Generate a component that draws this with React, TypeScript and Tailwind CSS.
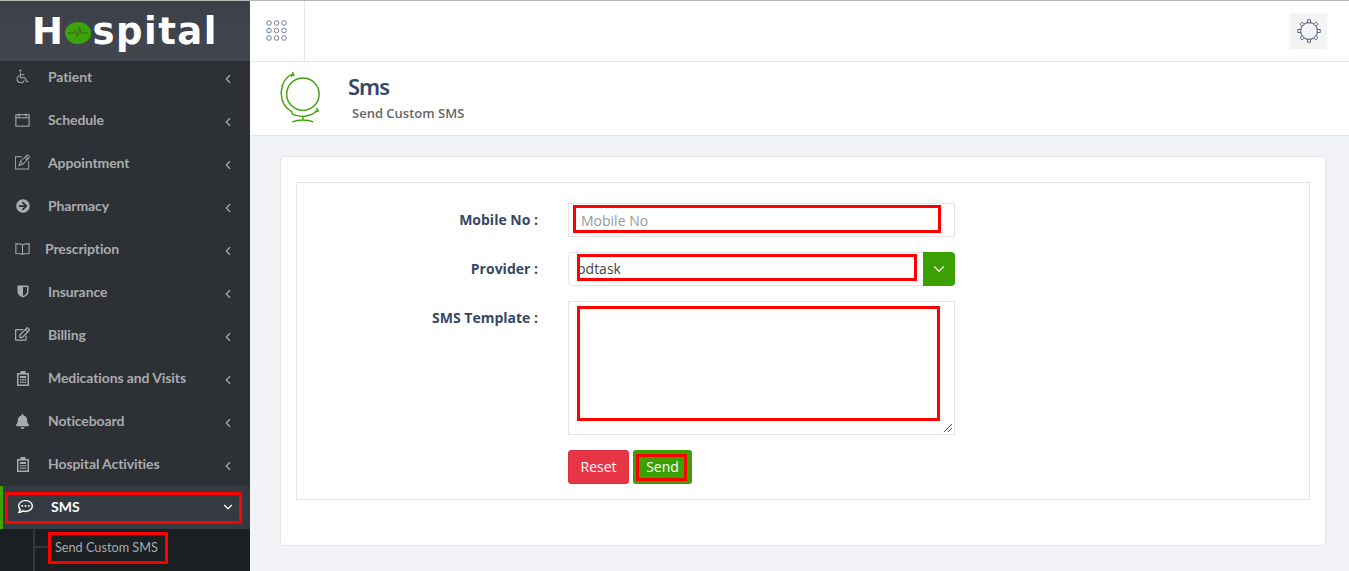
import { ChevronDown, ChevronLeft } from 'lucide-react';
import { FaArrowCircleRight, FaBell, FaRegCommentDots, FaRegEdit } from 'react-icons/fa';
import { TfiPencilAlt } from 'react-icons/tfi';

function WheelchairIcon() {
  return (
    <svg width="17" height="17" viewBox="0 0 17 17" fill="none" stroke="currentColor" strokeWidth="1.200" className="-mt-[2px]">
      <circle cx="6" cy="1.800" r="1.300" fill="currentColor" stroke="none" />
      <path d="M6 4v6h5l2.500 4.500 1.500-.5" />
      <path d="M6 6.500h4.500" />
      <path d="M4.500 7.500a4.300 4.300 0 1 0 6 5.500" />
    </svg>
  );
}

function CalendarIcon() {
  return (
    <svg width="17" height="16" viewBox="0 0 17 16" fill="none" stroke="currentColor" strokeWidth="1.200" className="-mt-[2px]">
      <rect x="1" y="2" width="15" height="13" />
      <path d="M1 5.500h15" />
      <path d="M4.500 1v3M12.500 1v3" strokeWidth="1.600" />
    </svg>
  );
}

function BookIcon() {
  return (
    <svg width="17" height="14" viewBox="0 0 17 14" fill="none" stroke="currentColor" strokeWidth="1.200" className="-mt-[2px]">
      <path d="M8.500 2.500C7 1 3.500 1 1 1v11c2.500 0 6 0 7.500 1 1.500-1 5-1 7.500-1V1c-2.500 0-6 0-7.500 1.500zM8.500 2.500V13" />
    </svg>
  );
}

function ShieldIcon() {
  return (
    <svg width="12" height="13" viewBox="0 0 12 13" fill="currentColor" className="-mt-[2px]">
      <path d="M0.500 0.500h11v6c0 3-2.500 5-5.500 6-3-1-5.500-3-5.500-6z" />
      <path d="M6 2h4v4.500c0 2-1.800 3.500-4 4.500z" fill="#2d3035" />
    </svg>
  );
}

function ClipboardHospitalIcon() {
  return (
    <svg width="12" height="15" viewBox="0 0 12 15" fill="currentColor">
      <path d="M0 2h3.500V0h5v2H12v13H0zM1.500 3.500V13.500h9V3.500z" fillRule="evenodd" />
      <path d="M3 5h6v2H3zM3 8h1.500v1.500H3zM5.250 8h1.500v1.500h-1.500zM7.500 8H9v1.500H7.500zM3 10.500h1.500V12H3zM5.250 10.500h1.500V12h-1.500zM7.500 10.500H9V12H7.500z" />
    </svg>
  );
}

const navItems = [
  { label: 'Patient', icon: <WheelchairIcon />, textClass: 'ml-[18px]' },
  { label: 'Schedule', icon: <CalendarIcon />, textClass: 'ml-[18px]' },
  { label: 'Appointment', icon: <TfiPencilAlt size={16} className="-mt-[3px]" />, textClass: 'ml-[18px]' },
  { label: 'Pharmacy', icon: <FaArrowCircleRight size={14} className="-mt-[2px]" />, textClass: 'ml-[18px]' },
  { label: 'Prescription', icon: <BookIcon />, textClass: 'ml-[15px]' },
  { label: 'Insurance', icon: <ShieldIcon />, textClass: 'ml-[18px]' },
  { label: 'Billing', icon: <FaRegEdit size={16} className="-mt-[3px]" />, textClass: 'ml-[18px]' },
  { label: 'Medications and Visits', icon: <ClipboardHospitalIcon />, textClass: 'ml-[18px]' },
  { label: 'Noticeboard', icon: <FaBell size={15} className="-mt-[1px]" />, textClass: 'ml-[18px]' },
  { label: 'Hospital Activities', icon: <ClipboardHospitalIcon />, textClass: 'ml-[18px]' },
];

function Logo() {
  return (
    <div className="flex items-center text-[37px] font-bold tracking-[1.500px] text-white leading-none font-['DejaVu_Sans',sans-serif]">
      H
      <svg width="26" height="22" viewBox="0 0 26 22" className="mx-[1px] mt-[4px]">
        <ellipse cx="13" cy="11" rx="13" ry="11" fill="#3ea30a" />
        <path d="M3 11h6l1.500-3 2 7 2-10 1.500 6h7" fill="none" stroke="#2d6a10" strokeWidth="1" />
      </svg>
      spital
    </div>
  );
}

function GridDots() {
  const points = [0, 1, 2].flatMap((r) => [0, 1, 2].map((c) => [c, r]));
  return (
    <svg width="22" height="22" viewBox="0 0 22 22">
      {points.map(([c, r]) => (
        <circle
          key={`${c}-${r}`}
          cx={3 + c * 7.500}
          cy={3 + r * 7.500}
          r="2.300"
          fill="none"
          stroke={c === 1 ? '#8b7f8e' : '#6e7fa5'}
          strokeWidth="1"
        />
      ))}
    </svg>
  );
}

function Gear() {
  const teeth = [0, 45, 90, 135, 180, 225, 270, 315];
  return (
    <svg width="24" height="24" viewBox="0 0 24 24">
      <circle cx="12" cy="12" r="8.500" fill="none" stroke="#3c4150" strokeWidth="1" />
      {teeth.map((a) => (
        <rect
          key={a}
          x="10.500"
          y="0.800"
          width="3"
          height="3"
          fill="#f4f4f4"
          stroke="#566a88"
          strokeWidth="0.900"
          transform={`rotate(${a} 12 12)`}
        />
      ))}
    </svg>
  );
}

function GlobeIcon() {
  return (
    <svg width="42" height="52" viewBox="0 0 44 54" fill="none" stroke="#3ea30a" strokeWidth="1.500" className="mb-[3px]">
      <circle cx="24" cy="24" r="17" />
      <path d="M13.500 43.500C4 38 0.500 29 1.500 20 2.500 11 7 5.500 13 3" />
      <path d="M13 1l1.500 3-3 1M12 44.500c8 4.500 20 3.500 27-3" />
      <path d="M38.500 38.500l1.500 3-3.500.5" />
      <path d="M24 47v5M13 53c6-2.500 16-2.500 22 0" />
    </svg>
  );
}

export default function App() {
  return (
    <div className="flex h-[571px] w-[1349px] overflow-hidden border-t border-[#b5b5b5] bg-[#f1f3f6] font-['Open_Sans',sans-serif]">
      <aside className="flex w-[250px] shrink-0 flex-col overflow-hidden bg-[#2d3035]">
        <div className="relative z-10 flex h-[60px] shrink-0 items-center justify-center bg-gradient-to-b from-[#3c4047] to-[#42464f]">
          <Logo />
        </div>
        <nav className="-mt-[5px] flex flex-col font-['Lato',sans-serif]">
          {navItems.map((item) => (
            <div key={item.label} className="flex h-[43px] items-center pl-[15px] pr-[15px] text-[#a9abae]">
              <span className="flex w-[15px] justify-center">{item.icon}</span>
              <span className={`${item.textClass} flex-1 pb-[2px] text-[14px] font-bold tracking-[-0.1px]`}>{item.label}</span>
              <ChevronLeft size={14} className="mt-[3px]" />
            </div>
          ))}
          <div className="relative flex h-[43px] items-center border-l-[3px] border-[#3ea300] bg-[#353942] pb-[2px] pl-[15px] pr-[15px] text-white">
            <FaRegCommentDots size={15} />
            <span className="ml-[18px] flex-1 text-[14px] font-bold">SMS</span>
            <ChevronDown size={14} />
            <div className="absolute left-[2px] right-[8px] top-[6px] h-[32px] border-[3px] border-[#ff0000]" />
          </div>
          <div className="relative h-[45px] bg-[#1c1f22]">
            <div className="absolute bottom-0 left-[33px] top-0 w-[2px] bg-[#33373c]" />
            <div className="absolute left-[35px] top-[17px] h-[2px] w-[14px] bg-[#33373c]" />
            <div className="absolute left-[48px] top-[3px] flex h-[32px] w-[120px] items-center border-[3px] border-[#ff0000] pl-[4px] text-[12.700px] whitespace-nowrap text-[#a9abae]">
              Send Custom SMS
            </div>
          </div>
        </nav>
      </aside>

      <main className="flex min-w-0 flex-1 flex-col">
        <header className="flex h-[61px] shrink-0 items-center justify-between border-b border-[#e4e6ec] bg-white pr-[22px]">
          <div className="flex h-full w-[55px] items-center justify-center border-r border-[#e4e6ec]">
            <GridDots />
          </div>
          <div className="flex h-[36px] w-[37px] items-center justify-center bg-[#f4f4f4]">
            <Gear />
          </div>
        </header>

        <section className="flex h-[74px] shrink-0 items-center border-b border-[#e4e6ec] bg-white pl-[30px]">
          <GlobeIcon />
          <div className="ml-[26px] -mt-[5px]">
            <h1 className="text-[22px] leading-[30px] font-semibold text-[#374767] font-['Noto_Sans',sans-serif] tracking-[-1px]">Sms</h1>
            <p className="mt-[3px] ml-[4px] text-[13px] leading-[18px] font-semibold text-[#666666]">Send Custom SMS</p>
          </div>
        </section>

        <div className="px-[30px] pt-[20px]">
          <div className="h-[390px] w-[1046px] rounded border border-[#e4e5e7] bg-white px-[15px] pt-[25px]">
            <form className="flex h-[318px] flex-col border border-[#e4e5e7] pt-[20px] text-[14px] text-[#555555]">
              <div className="flex h-[34px] items-start">
                <label className="w-[241px] pt-[6px] text-right font-bold text-[#374767]">Mobile No :</label>
                <div className="relative ml-[30px] h-[34px] w-[387px] border border-[#e4e5e7]">
                  <span className="absolute left-[12px] top-[6px] text-[#999999]">Mobile No</span>
                  <div className="absolute left-[4px] top-[1px] h-[28px] w-[368px] border-[3px] border-[#ff0000]" />
                </div>
              </div>

              <div className="mt-[15px] flex h-[34px] items-start">
                <label className="w-[241px] pt-[6px] text-right font-bold text-[#374767]">Provider :</label>
                <div className="relative ml-[30px] flex h-[34px] w-[387px] rounded border border-[#e4e5e7]">
                  <span className="absolute left-[8px] top-[5px] text-[#444444]">bdtask</span>
                  <div className="absolute left-[8px] top-[1px] h-[27px] w-[340px] border-[3px] border-[#ff0000]" />
                  <div className="absolute -right-[1px] -top-[1px] flex h-[34px] w-[32px] items-center justify-center rounded-r bg-[#3ba000] text-white">
                    <ChevronDown size={18} strokeWidth={1.500} />
                  </div>
                </div>
              </div>

              <div className="mt-[15px] flex h-[134px] items-start">
                <label className="w-[241px] pt-[6px] text-right font-bold text-[#374767]">SMS Template :</label>
                <div className="relative ml-[30px] h-[134px] w-[387px] border border-[#e4e5e7]">
                  <div className="absolute left-[8px] top-[4px] h-[115px] w-[363px] border-[3px] border-[#ff0000]" />
                  <svg width="10" height="10" viewBox="0 0 10 10" stroke="#555" strokeWidth="1" className="absolute bottom-[1px] right-[1px]">
                    <path d="M1 9 9 1M5 9l4-4" />
                  </svg>
                </div>
              </div>

              <div className="mt-[15px] ml-[271px] flex h-[34px] gap-[4px]">
                <button type="button" className="h-[34px] w-[61px] rounded-[3px] border border-[#d9303f] bg-[#e73545] pb-[1px] text-[14px] text-white">
                  Reset
                </button>
                <button type="button" className="relative h-[34px] w-[59px] rounded-[3px] bg-[#3ba000] pb-[2px] text-[14px] text-white">
                  Send
                  <span className="absolute left-[3px] top-[4px] h-[27px] w-[51px] border-[3px] border-[#ff0000]" />
                </button>
              </div>
            </form>
          </div>
        </div>
      </main>
    </div>
  );
}
